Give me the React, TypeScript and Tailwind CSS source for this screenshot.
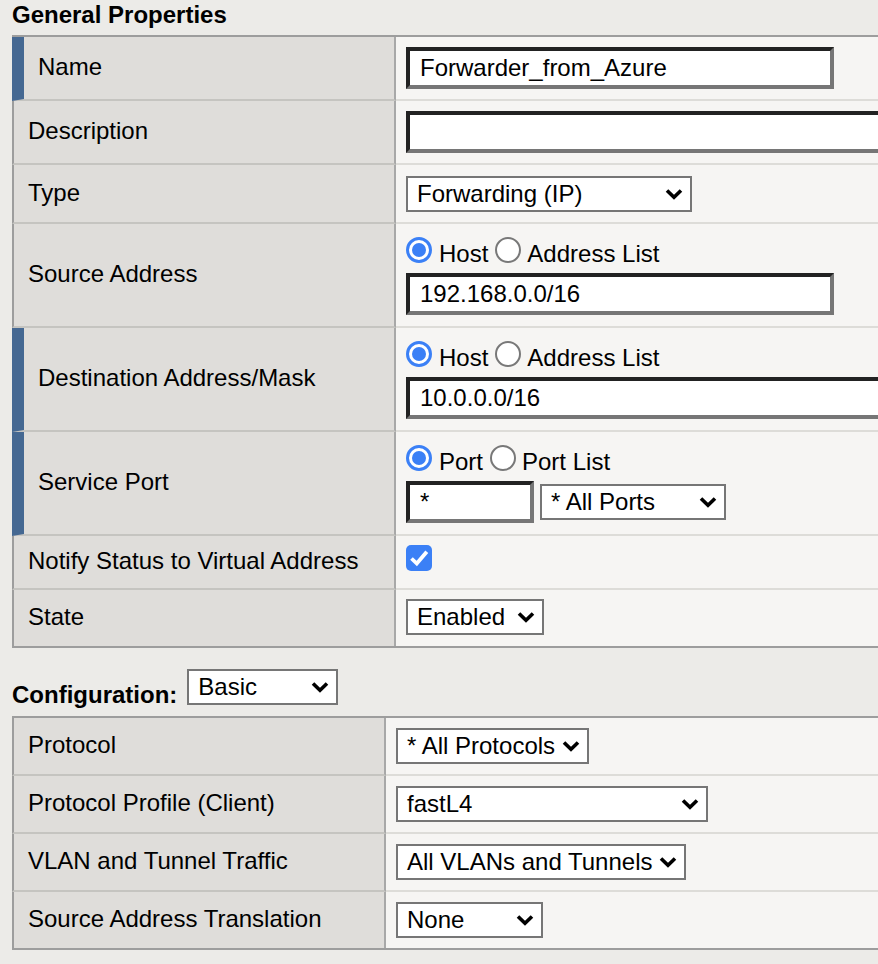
import React from "react";

const Chevron = () => (
  <svg width="18" height="12" viewBox="0 0 18 12" className="shrink-0">
    <polyline points="2,2.5 9,9.3 16,2.5" fill="none" stroke="#000" strokeWidth="3.6" />
  </svg>
);

function Select({ className, children }: { className: string; children: React.ReactNode }) {
  return (
    <div
      className={
        "flex h-[36px] shrink-0 items-center justify-between border-2 border-[#767676] bg-white pl-[9px] pr-[7px] " +
        className
      }
    >
      <span className="whitespace-nowrap leading-[26px]">{children}</span>
      <Chevron />
    </div>
  );
}

function Input({ className, value }: { className: string; value: string }) {
  return (
    <div
      className={
        "flex h-[42px] shrink-0 items-center border-4 border-t-[#222222] border-l-[#222222] border-b-[#767676] border-r-[#767676] bg-white pl-[10px] " +
        className
      }
    >
      <span className="whitespace-nowrap leading-[26px]">{value}</span>
    </div>
  );
}

function Radio({ checked }: { checked?: boolean }) {
  if (checked) {
    return (
      <span className="relative block h-[26px] w-[26px] shrink-0 rounded-full border-[3px] border-[#3b80f6] bg-white">
        <span className="absolute inset-[3px] rounded-full bg-[#3b80f6]" />
      </span>
    );
  }
  return <span className="block h-[26px] w-[26px] shrink-0 rounded-full border-2 border-[#787878] bg-white" />;
}

function RadioLine({ a, b }: { a: string; b: string }) {
  return (
    <div className="flex h-[26px] items-end">
      <Radio checked />
      <span className="ml-[7px] whitespace-nowrap leading-[16.6px]">{a}</span>
      <span className="ml-[7px]">
        <Radio />
      </span>
      <span className="ml-[6px] whitespace-nowrap leading-[16.6px]">{b}</span>
    </div>
  );
}

function Checkbox() {
  return (
    <span className="flex h-[26px] w-[26px] items-center justify-center rounded-[5px] bg-[#3b80f6]">
      <svg width="26" height="26" viewBox="0 0 26 26">
        <path d="M5.5 13.5 L10.8 18.6 L20.8 6.8" fill="none" stroke="#fff" strokeWidth="3.8" />
      </svg>
    </span>
  );
}

type RowProps = {
  label: string;
  blue?: boolean;
  last?: boolean;
  h: string;
  labelW: string;
  valueClass?: string;
  children?: React.ReactNode;
};

function Row({ label, blue, last, h, labelW, valueClass, children }: RowProps) {
  return (
    <div className={"flex " + h}>
      <div
        className={
          "flex shrink-0 items-center border-r-2 border-r-[#a8a8a8] bg-[#dfddda] pb-[2px] pl-[14px] " +
          labelW +
          " " +
          (blue ? "border-l-[12px] border-l-[#456892] " : "border-l-2 border-l-[#9d9d9d] ") +
          (last ? "" : "border-b-2 border-b-[#c5c4c0]")
        }
      >
        <span className="whitespace-nowrap leading-[28px]">{label}</span>
      </div>
      <div
        className={
          "flex min-w-0 flex-1 bg-[#f6f5f3] pl-[10px] " +
          (last ? "" : "border-b-2 border-b-[#dddcd8] ") +
          (valueClass ?? "items-center")
        }
      >
        {children}
      </div>
    </div>
  );
}

export default function App() {
  const top = "w-[384px]";
  const bot = "w-[374px]";
  return (
    <div className="h-[964px] w-[878px] overflow-hidden bg-[#ecebe8] font-['Liberation_Sans',Arial,sans-serif] text-[24px] text-black">
      <div className="h-[35px] pl-[12px] pt-[1px] font-bold leading-[28px]">General Properties</div>

      <div className="ml-[12px] w-[900px] border-y-2 border-[#9d9d9d]">
        <Row label="Name" blue h="h-[64px]" labelW={top}>
          <Input className="w-[428px]" value="Forwarder_from_Azure" />
        </Row>
        <Row label="Description" h="h-[64px]" labelW={top}>
          <Input className="w-[600px]" value="" />
        </Row>
        <Row label="Type" h="h-[59px]" labelW={top}>
          <Select className="w-[286px]">Forwarding (IP)</Select>
        </Row>
        <Row label="Source Address" h="h-[104px]" labelW={top} valueClass="flex-col pt-[13px]">
          <RadioLine a="Host" b="Address List" />
          <Input className="mt-[10px] w-[428px]" value="192.168.0.0/16" />
        </Row>
        <Row label="Destination Address/Mask" blue h="h-[104px]" labelW={top} valueClass="flex-col pt-[13px]">
          <RadioLine a="Host" b="Address List" />
          <Input className="mt-[10px] w-[600px]" value="10.0.0.0/16" />
        </Row>
        <Row label="Service Port" blue h="h-[104px]" labelW={top} valueClass="flex-col pt-[13px]">
          <RadioLine a="Port" b="Port List" />
          <div className="mt-[10px] flex items-center">
            <Input className="w-[128px]" value="*" />
            <Select className="ml-[6px] w-[186px]">* All Ports</Select>
          </div>
        </Row>
        <Row label="Notify Status to Virtual Address" h="h-[54px]" labelW={top} valueClass="items-start pt-[9px]">
          <Checkbox />
        </Row>
        <Row label="State" last h="h-[56px]" labelW={top} valueClass="items-center pb-[3px]">
          <Select className="w-[138px]">Enabled</Select>
        </Row>
      </div>

      <div className="flex h-[68px] items-start pl-[12px]">
        <span className="mt-[33px] whitespace-nowrap font-bold leading-[28px]">Configuration:</span>
        <div className="ml-[10px] mt-[21px]">
          <Select className="w-[151px]">Basic</Select>
        </div>
      </div>

      <div className="ml-[12px] w-[900px] border-y-2 border-[#9d9d9d]">
        <Row label="Protocol" h="h-[58px]" labelW={bot}>
          <Select className="w-[193px]">* All Protocols</Select>
        </Row>
        <Row label="Protocol Profile (Client)" h="h-[58px]" labelW={bot}>
          <Select className="w-[312px]">fastL4</Select>
        </Row>
        <Row label="VLAN and Tunnel Traffic" h="h-[58px]" labelW={bot}>
          <Select className="w-[290px]">All VLANs and Tunnels</Select>
        </Row>
        <Row label="Source Address Translation" last h="h-[56px]" labelW={bot}>
          <Select className="w-[147px]">None</Select>
        </Row>
      </div>
    </div>
  );
}
